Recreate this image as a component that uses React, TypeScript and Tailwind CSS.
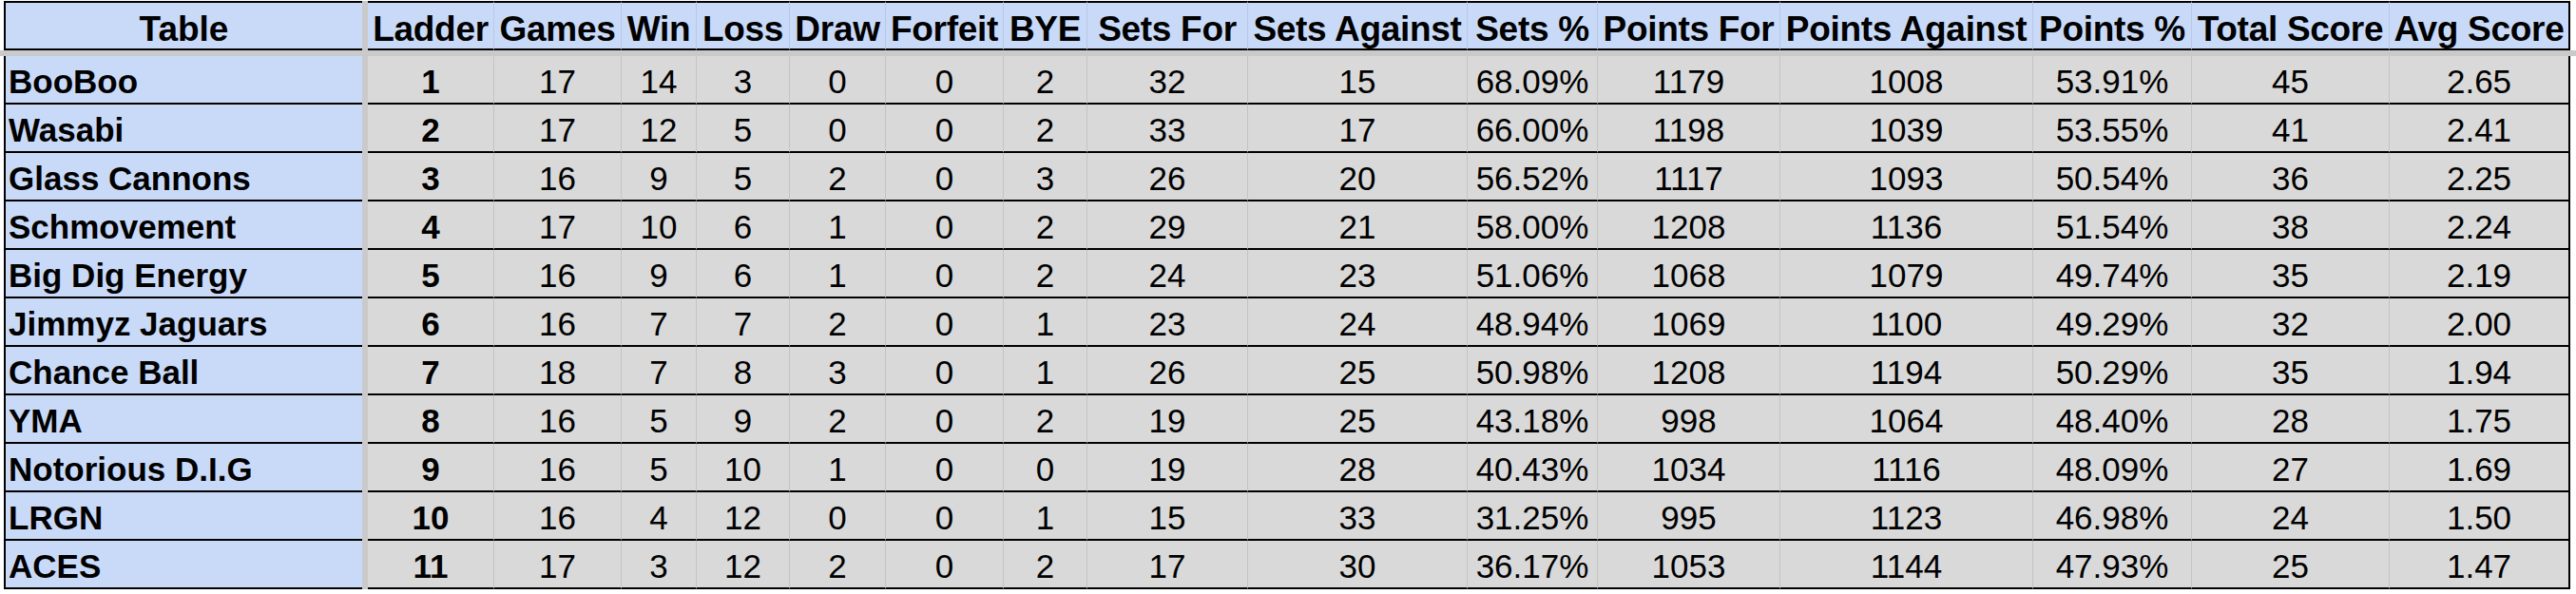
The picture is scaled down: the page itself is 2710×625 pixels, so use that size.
const columns = [
  "Ladder",
  "Games",
  "Win",
  "Loss",
  "Draw",
  "Forfeit",
  "BYE",
  "Sets For",
  "Sets Against",
  "Sets %",
  "Points For",
  "Points Against",
  "Points %",
  "Total Score",
  "Avg Score",
];

const rows: [string, ...string[]][] = [
  ["BooBoo", "1", "17", "14", "3", "0", "0", "2", "32", "15", "68.09%", "1179", "1008", "53.91%", "45", "2.65"],
  ["Wasabi", "2", "17", "12", "5", "0", "0", "2", "33", "17", "66.00%", "1198", "1039", "53.55%", "41", "2.41"],
  ["Glass Cannons", "3", "16", "9", "5", "2", "0", "3", "26", "20", "56.52%", "1117", "1093", "50.54%", "36", "2.25"],
  ["Schmovement", "4", "17", "10", "6", "1", "0", "2", "29", "21", "58.00%", "1208", "1136", "51.54%", "38", "2.24"],
  ["Big Dig Energy", "5", "16", "9", "6", "1", "0", "2", "24", "23", "51.06%", "1068", "1079", "49.74%", "35", "2.19"],
  ["Jimmyz Jaguars", "6", "16", "7", "7", "2", "0", "1", "23", "24", "48.94%", "1069", "1100", "49.29%", "32", "2.00"],
  ["Chance Ball", "7", "18", "7", "8", "3", "0", "1", "26", "25", "50.98%", "1208", "1194", "50.29%", "35", "1.94"],
  ["YMA", "8", "16", "5", "9", "2", "0", "2", "19", "25", "43.18%", "998", "1064", "48.40%", "28", "1.75"],
  ["Notorious D.I.G", "9", "16", "5", "10", "1", "0", "0", "19", "28", "40.43%", "1034", "1116", "48.09%", "27", "1.69"],
  ["LRGN", "10", "16", "4", "12", "0", "0", "1", "15", "33", "31.25%", "995", "1123", "46.98%", "24", "1.50"],
  ["ACES", "11", "17", "3", "12", "2", "0", "2", "17", "30", "36.17%", "1053", "1144", "47.93%", "25", "1.47"],
];

// table | frozen split | 15 stat columns
const gridCols =
  "grid grid-cols-[377px_6px_133px_134px_79px_98px_101px_124px_88px_169px_231px_137px_192px_266px_167px_208px_190px]";

const App = () => {
  return (
    <div className="w-[2710px] h-[625px] bg-white pt-[1px] font-['Liberation_Sans',Arial,sans-serif] text-black">
      {/* header */}
      <div className={`${gridCols} pl-[4px] h-[52px]`}>
        <div className="flex items-end justify-center pb-[2px] bg-[#c9daf8] border-t-2 border-b-2 border-l-2 border-black text-[37px] font-bold leading-none">
          Table
        </div>
        <div className="bg-[#cacaca]" />
        {columns.map((col, i) => (
          <div
            key={col}
            className={`flex items-end justify-center pb-[2px] bg-[#c9daf8] border-t-2 border-b-2 border-black text-[37px] font-bold leading-none whitespace-nowrap tracking-[-0.3px] ${
              i === columns.length - 1 ? "border-r-2" : "border-r border-r-[#b6c8e6]"
            }`}
          >
            {col}
          </div>
        ))}
      </div>

      {/* frozen row split */}
      <div className="h-[6px] w-full bg-[#cacaca]" />

      {/* body */}
      <div className={`${gridCols} pl-[4px]`}>
        {rows.map((row) => (
          <div key={row[0]} className="contents">
            <div className="flex items-end h-[51px] pl-[3px] pb-[5px] bg-[#c9daf8] border-b-2 border-l-2 border-black text-[35px] font-bold leading-none whitespace-nowrap">
              {row[0]}
            </div>
            <div className="bg-[#cacaca]" />
            {row.slice(1).map((val, i) => (
              <div
                key={i}
                className={`flex items-end justify-center h-[51px] pb-[5px] bg-[#d9d9d9] border-b-2 border-b-black text-[35px] leading-none ${
                  i === 0 ? "font-bold" : ""
                } ${i === row.length - 2 ? "border-r-2 border-r-black" : "border-r border-r-[#c4c4c4]"}`}
              >
                {val}
              </div>
            ))}
          </div>
        ))}
      </div>
    </div>
  );
};

export default App;
